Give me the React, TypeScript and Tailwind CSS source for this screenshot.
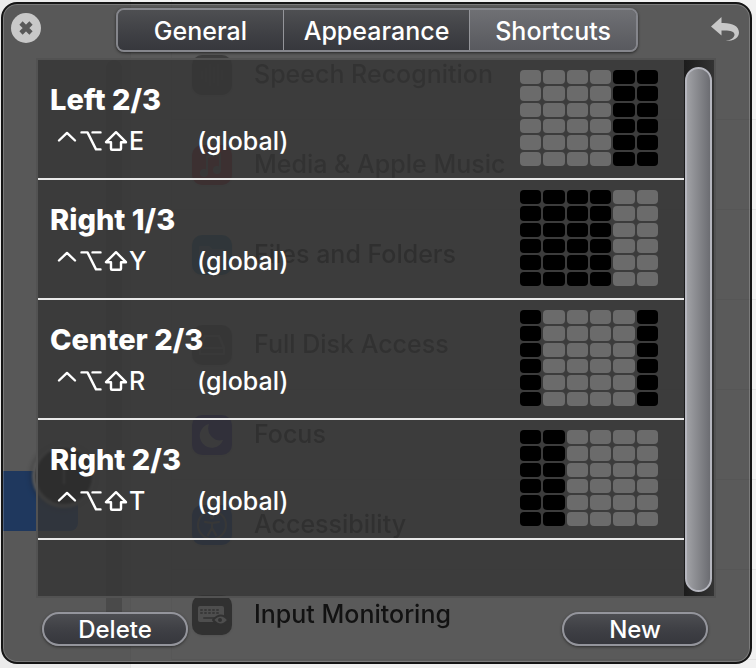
import { useState } from "react";
import type { ReactNode } from "react";

type Shortcut = { name: string; letter: string; from: number; to: number };

const shortcuts: Shortcut[] = [
  { name: "Left 2/3", letter: "E", from: 0, to: 3 },
  { name: "Right 1/3", letter: "Y", from: 4, to: 5 },
  { name: "Center 2/3", letter: "R", from: 1, to: 4 },
  { name: "Right 2/3", letter: "T", from: 2, to: 5 },
];

const tabs = ["General", "Appearance", "Shortcuts"];

function Glyph({ children }: { children: ReactNode }) {
  return (
    <svg viewBox="0 0 40 40" className="size-10" fill="none" stroke="#a8a8a8" strokeWidth="2" strokeLinecap="round" strokeLinejoin="round" aria-hidden="true">
      {children}
    </svg>
  );
}

const settings: { label: string; tone: string; text: string; glyph: ReactNode }[] = [
  {
    label: "Speech Recognition",
    tone: "bg-[#909090]",
    text: "text-[#585858]",
    glyph: <path d="M10 17v6M14 14v12M18 10v20M22 13v14M26 10v20M30 16v8" />,
  },
  {
    label: "Media & Apple Music",
    tone: "bg-[#f02848]",
    text: "text-[#505050]",
    glyph: (
      <>
        <path d="M15 27V12l13-3v15" />
        <ellipse cx="12" cy="28" rx="3" ry="3" fill="#a8a8a8" />
        <ellipse cx="25" cy="25" rx="3" ry="3" fill="#a8a8a8" />
      </>
    ),
  },
  {
    label: "Files and Folders",
    tone: "bg-[#2b94cc]",
    text: "text-[#202020]",
    glyph: <path d="M8 12h9l3 3h12v14H8z" fill="#7cb8dc" stroke="#7cb8dc" />,
  },
  {
    label: "Full Disk Access",
    tone: "bg-[#989898]",
    text: "text-[#404040]",
    glyph: <path d="M13 11h14l5 12v6H8v-6zM9 23h22" stroke="#c8c8c8" />,
  },
  {
    label: "Focus",
    tone: "bg-[#4038d8]",
    text: "text-[#303030]",
    glyph: <path d="M17 9a12 12 0 1 0 14 16A12 12 0 0 1 17 9z" fill="#e8e8f8" stroke="none" />,
  },
  {
    label: "Accessibility",
    tone: "bg-[#1268f8]",
    text: "text-[#303030]",
    glyph: (
      <>
        <circle cx="20" cy="20" r="14" />
        <path d="M13 17l7 1 7-1M20 18v5l-4 7M20 23l4 7" />
        <circle cx="20" cy="12" r="1" fill="#a8a8a8" />
      </>
    ),
  },
  {
    label: "Input Monitoring",
    tone: "bg-[#686868]",
    text: "text-black",
    glyph: (
      <>
        <rect x="6" y="11" width="26" height="16" rx="2" fill="#c8c8c8" stroke="none" />
        <path d="M9 15h20M9 18h20" stroke="#808080" strokeWidth="2" strokeDasharray="1 3" />
        <path d="M12 23h10" stroke="#808080" />
        <path d="M21 25q8-9 15 0q-7 9-15 0z" fill="#c8c8c8" stroke="#686868" />
        <circle cx="28" cy="25" r="2" fill="#686868" stroke="none" />
      </>
    ),
  },
];

function SettingsBehind() {
  return (
    <div className="absolute inset-0 flex overflow-hidden bg-[#ebebeb]" aria-hidden="true">
      <div className="flex w-[130px] shrink-0 justify-end pt-[60px] pr-2 pb-6">
        <div className="w-4 rounded-full bg-[#bcbcbc]" />
      </div>
      <div className="flex-1 border-l border-[#e4e4e4] bg-[#f1f1f1] pl-10">
        <ul className="border-l border-[#e8e8e8] pt-[30px]">
          {settings.map((s) => (
            <li key={s.label} className="flex h-[90px] items-center gap-[22px] border-b border-[#e4e4e4] pl-5 blur-[0.5px]">
              <span className={`rounded-[10px] shadow ${s.tone}`}>
                <Glyph>{s.glyph}</Glyph>
              </span>
              <span className={`text-[25px] font-medium ${s.text}`}>{s.label}</span>
            </li>
          ))}
        </ul>
      </div>
      <div className="absolute left-0.5 top-[471px] h-[60px] w-[76px] rounded-r-lg bg-[#2c80ff]" />
      <div className="absolute left-8 top-[444px] flex size-16 items-center justify-center rounded-full border-4 border-[#e8e8e8] bg-black shadow-[0_0_6px_rgba(0,0,0,0.5)] blur-[1px]">
        <div className="h-4 w-0.5 bg-[#a8a8a8]" />
      </div>
    </div>
  );
}

function ModifierKeys() {
  return (
    <svg viewBox="0 0 72 22" className="h-[22px] w-[72px]" fill="none" stroke="white" strokeWidth="2.4" strokeLinecap="round" strokeLinejoin="round" role="img" aria-label="Control Option Shift">
      <path d="M2 10.500L10 2.900L18 10.500" />
      <path d="M24.500 2.400h6l8.500 17H43.500M35.500 2.400h8" />
      <path d="M59 2.200L49 12.200h5v6.500q0 1 1 1h8q1 0 1-1v-6.500h5z" strokeWidth="2.4" />
    </svg>
  );
}

function GridPreview({ from, to }: { from: number; to: number }) {
  return (
    <div className="grid h-24 w-[138px] shrink-0 grid-cols-6 grid-rows-6 gap-0.5">
      {Array.from({ length: 36 }, (_, i) => {
        const col = i % 6;
        const on = col >= from && col <= to;
        return <span key={i} className={on ? "rounded-sm bg-[#6b6b6b]" : "rounded-sm bg-black"} />;
      })}
    </div>
  );
}

function PillButton({ children }: { children: ReactNode }) {
  return (
    <button className="flex h-[34px] w-[146px] items-center justify-center rounded-full border-2 border-[#94959c] bg-linear-to-b from-[#4d4e52] via-[#3f4045] to-[#36373d] pt-0.5 text-2xl font-medium shadow-[0_1px_3px_rgba(0,0,0,0.5)]">
      {children}
    </button>
  );
}

export default function App() {
  const [active, setActive] = useState("Shortcuts");

  return (
    <div className="relative flex min-h-screen flex-col pt-0.5 pr-1 pb-1 pl-px font-['Inter',sans-serif] text-white">
      <SettingsBehind />
      <main className="relative flex flex-1 flex-col rounded-2xl border-2 border-[#151515] bg-[#1a1a1a]/70 shadow-[inset_0_0_0_1px_rgba(255,255,255,0.2)]">
        <header className="grid grid-cols-[1fr_auto_1fr] items-start pt-1 pr-[11px] pl-2">
          <button aria-label="Close" className="mt-[5px] size-[30px]">
            <svg viewBox="0 0 30 30" className="size-full">
              <circle cx="15" cy="15" r="15" fill="#c8c8c8" />
              <path d="M10 10l10 10M20 10l-10 10" stroke="#585858" strokeWidth="4.6" />
            </svg>
          </button>
          <div role="tablist" className="ml-1 grid h-11 w-[522px] grid-cols-[167fr_188fr_167fr] overflow-hidden rounded-lg border-2 border-[#85868c] shadow-[0_1px_3px_rgba(0,0,0,0.6)]">
            {tabs.map((tab) => (
              <button
                key={tab}
                role="tab"
                aria-selected={active === tab}
                onClick={() => setActive(tab)}
                className={`border-r border-[#94959a] pt-[3px] text-[25px] font-medium last:border-r-0 ${
                  active === tab
                    ? "bg-linear-to-b from-[#6f7074] to-[#58595e]"
                    : "bg-linear-to-b from-[#4e4f52] via-[#414246] to-[#36373c]"
                }`}
              >
                {tab}
              </button>
            ))}
          </div>
          <button aria-label="Undo" className="mt-[9px] h-[25px] w-7 justify-self-end">
            <svg viewBox="0 0 28 25" className="size-full" fill="#c8c8c8">
              <path d="M0 9.5L10.500 0v6C21 5.500 28 9 28 15.500c0 5-5 8.500-13.500 8.500c6-1.200 9-3.500 9-6.500c0-3.200-5-4.500-13-4v5z" />
            </svg>
          </button>
        </header>

        <section className="mr-[34px] ml-[33px] mt-[6px] flex flex-1 border-2 border-[#525252]">
          <ul className="flex-1 bg-[#343434]/80">
            {shortcuts.map((s) => (
              <li key={s.name} className="flex h-[120px] items-start justify-between border-b-2 border-[#e8e8e8] pt-[10px] pr-[26px] pl-3">
                <div className="pt-3">
                  <h2 className="text-[29px] leading-9 font-extrabold">{s.name}</h2>
                  <p className="flex items-center pt-[7px] pl-[7px] text-[25px] leading-8 font-medium">
                    <ModifierKeys />
                    <span className="w-[68px]">{s.letter}</span>
                    <span>(global)</span>
                  </p>
                </div>
                <GridPreview from={s.from} to={s.to} />
              </li>
            ))}
          </ul>
          <div className="flex w-[30px] bg-linear-to-r from-[#1c1c1c] to-[#333333] pt-[7px] pr-0.5 pb-1 pl-px">
            <div role="scrollbar" aria-label="Shortcuts list" aria-valuenow={0} className="flex-1 rounded-full border-2 border-[#b5b6be] bg-linear-to-r from-[#a0a1a5] to-[#6c6d72]" />
          </div>
        </section>

        <footer className="flex justify-between pt-[14px] pr-[42px] pb-4 pl-[39px]">
          <PillButton>Delete</PillButton>
          <PillButton>New</PillButton>
        </footer>
      </main>
    </div>
  );
}
